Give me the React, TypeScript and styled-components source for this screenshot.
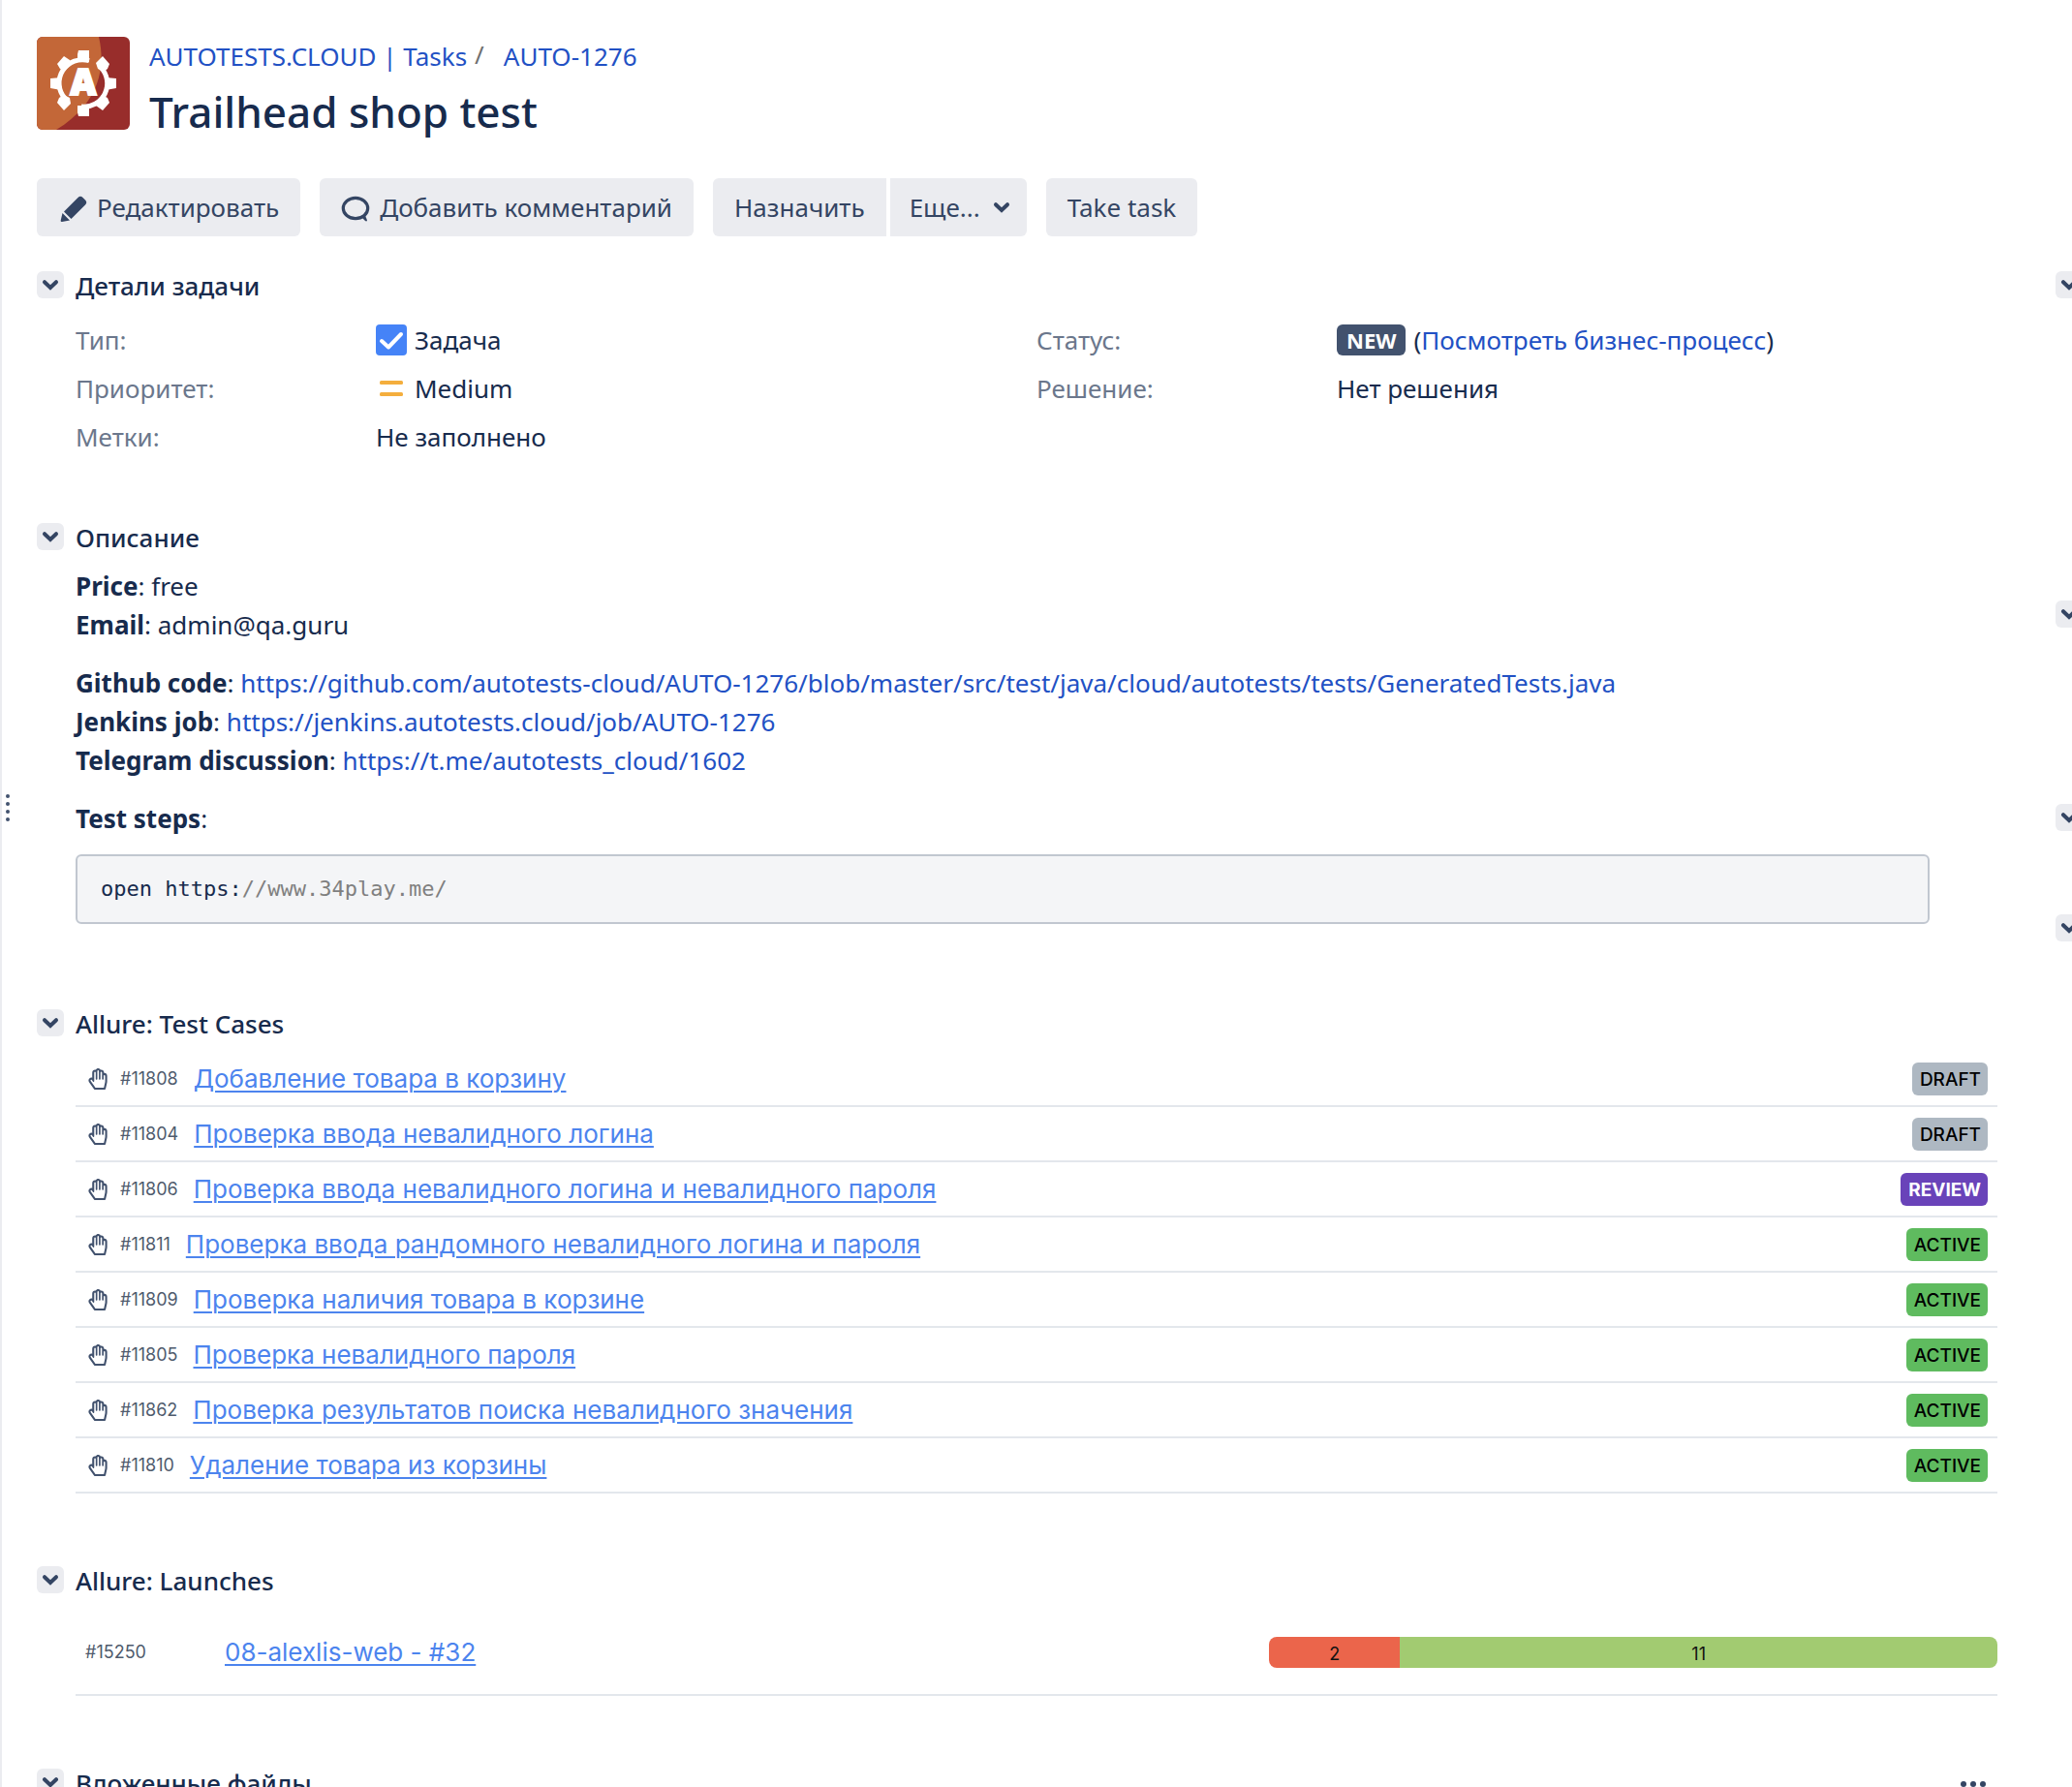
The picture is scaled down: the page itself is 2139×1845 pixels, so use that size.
import React from 'react';
import styled, { createGlobalStyle } from 'styled-components';
import { FaRegHandPaper } from 'react-icons/fa';

const GlobalStyle = createGlobalStyle`
  *, *::before, *::after { box-sizing: border-box; }
  body {
    margin: 0;
    background: #fff;
    color: #172b4d;
    font-family: 'Noto Sans', 'Open Sans', sans-serif;
    font-size: 26px;
    line-height: 40px;
  }
  h1, h2, p, dl, dd, ul, pre { margin: 0; padding: 0; }
  button { font: inherit; border: 0; }
`;

const Page = styled.div`
  display: flex;
  height: 100vh;
  overflow: hidden;
`;

const Splitter = styled.div`
  flex: 0 0 12px;
  display: flex;
  flex-direction: column;
  gap: 4px;
  padding: 820px 0 0 4px;
  border-left: 2px solid #ebecf0;
`;

const SplitterDot = styled.span`
  flex: none;
  width: 4px;
  height: 4px;
  border-radius: 2px;
  background: #42526e;
`;

const Main = styled.main`
  flex: 1;
  min-width: 0;
  padding: 38px 60px 0 26px;
`;

const Aside = styled.aside`
  flex: 0 0 17px;
  overflow: hidden;
  padding-top: 280px;
`;

const AsideBlock = styled.div<{ $height: number }>`
  height: ${(p) => p.$height}px;
`;

const Link = styled.a`
  color: #2251c4;
  text-decoration: none;
`;

const IssueHeader = styled.header`
  display: flex;
  gap: 20px;
`;

const Logo = styled.svg`
  flex: none;
  width: 96px;
  height: 96px;
  border-radius: 6px;
`;

const Breadcrumbs = styled.nav`
  display: flex;
`;

const Slash = styled.span`
  margin: 0 20px 0 8px;
  color: #707070;
  font-size: 26px;
  line-height: 36px;
`;

const Title = styled.h1`
  margin-top: 8px;
  font-size: 44px;
  font-weight: 500;
  line-height: 58px;
`;

const Toolbar = styled.div`
  display: flex;
  gap: 20px;
  margin-top: 40px;
`;

const ButtonGroup = styled.div`
  display: flex;
  gap: 4px;

  & > :first-child { border-radius: 6px 0 0 6px; }
  & > :last-child { border-radius: 0 6px 6px 0; }
`;

const ToolButton = styled.button<{ $menu?: boolean }>`
  display: flex;
  align-items: center;
  gap: 8px;
  height: 60px;
  padding: ${(p) => (p.$menu ? '0 12px 0 20px' : '0 22px')};
  border-radius: 6px;
  background: #ebecf0;
  color: #344563;
  white-space: nowrap;
`;

const Section = styled.section<{ $gap: number }>`
  margin-top: ${(p) => p.$gap}px;
`;

const SectionHead = styled.div`
  display: flex;
  align-items: center;
  gap: 12px;
  height: 40px;
`;

const Heading = styled.h2`
  flex: 1;
  padding-top: 1px;
  font-size: 26px;
  font-weight: 500;
`;

const ToggleButton = styled.button`
  display: block;
  flex: none;
  width: 28px;
  height: 28px;
  padding: 0;
  border-radius: 6px;
  background: #ebecf0;
`;

const MoreButton = styled.button`
  display: flex;
  padding: 0;
  margin-right: 10px;
  background: none;
`;

const Icon = styled.svg`
  display: block;
  flex: none;
`;

const SectionBody = styled.div`
  padding: 10px 0 0 40px;
`;

const Details = styled.dl`
  display: grid;
  grid-template-columns: 310px 1fr 310px 1fr;
  grid-auto-rows: 50px;
  align-items: center;
  padding: 12px 0 0 40px;
`;

const Term = styled.dt`
  color: #6b778c;
`;

const Value = styled.dd<{ $wide?: boolean }>`
  display: flex;
  align-items: center;
  gap: 8px;
  grid-column: ${(p) => (p.$wide ? 'span 3' : 'auto')};
`;

const StatusBadge = styled.span`
  padding: 0 10px;
  border-radius: 6px;
  background: #42526e;
  color: #fff;
  font-size: 22px;
  font-weight: 700;
  line-height: 32px;
`;

const Description = styled.div`
  padding: 11px 0 0 40px;
`;

const Paragraph = styled.p`
  margin-bottom: 20px;
`;

const StepsLabel = styled.p`
  margin-bottom: 17px;
`;

const CodeBlock = styled.pre`
  margin-right: 70px;
  padding: 14px 24px;
  border: 2px solid #c1c7d0;
  border-radius: 6px;
  background: #f4f5f7;
  font-family: 'DejaVu Sans Mono', monospace;
  font-size: 22px;
`;

const CodeComment = styled.span`
  color: #808080;
`;

const List = styled.ul`
  list-style: none;
  font-family: Inter, sans-serif;
`;

const CaseRow = styled.li`
  display: flex;
  align-items: center;
  height: 57px;
  padding: 0 10px 0 12px;
  border-bottom: 2px solid #e3e7ec;
  color: #42526e;
`;

const LaunchRow = styled.li`
  display: grid;
  grid-template-columns: 144px 1fr 752px;
  align-items: center;
  height: 90px;
  padding: 2px 0 0 10px;
  border-bottom: 2px solid #e3e7ec;
`;

const AllureId = styled.span`
  color: #4f5b6d;
  font-size: 18px;
`;

const CaseId = styled(AllureId)`
  margin: 0 16px 0 12px;
`;

const AllureLink = styled.a`
  color: #4c84ee;
  text-decoration: underline;
  text-decoration-thickness: 2px;
  text-underline-offset: 3px;
`;

type Status = 'DRAFT' | 'REVIEW' | 'ACTIVE';

const statusColors: Record<Status, string> = {
  DRAFT: '#aeb8c2',
  REVIEW: '#6943b9',
  ACTIVE: '#5fbb5f',
};

const CaseBadge = styled.span<{ $status: Status }>`
  margin-left: auto;
  padding: 2px 7px 0 8px;
  border-radius: 6px;
  background: ${(p) => statusColors[p.$status]};
  color: ${(p) => (p.$status === 'REVIEW' ? '#fff' : '#000')};
  font-size: 19px;
  font-weight: ${(p) => (p.$status === 'REVIEW' ? 700 : 500)};
  line-height: 32px;
`;

const Bar = styled.div`
  display: flex;
  height: 32px;
  border-radius: 8px;
  overflow: hidden;
`;

const BarPart = styled.span<{ $color: string }>`
  flex: 1;
  background: ${(p) => p.$color};
  color: #111;
  font-size: 18px;
  line-height: 36px;
  text-align: center;

  &:first-child { flex: 0 0 18%; }
`;

const cases: { id: string; name: string; status: Status }[] = [
  { id: '#11808', name: 'Добавление товара в корзину', status: 'DRAFT' },
  { id: '#11804', name: 'Проверка ввода невалидного логина', status: 'DRAFT' },
  { id: '#11806', name: 'Проверка ввода невалидного логина и невалидного пароля', status: 'REVIEW' },
  { id: '#11811', name: 'Проверка ввода рандомного невалидного логина и пароля', status: 'ACTIVE' },
  { id: '#11809', name: 'Проверка наличия товара в корзине', status: 'ACTIVE' },
  { id: '#11805', name: 'Проверка невалидного пароля', status: 'ACTIVE' },
  { id: '#11862', name: 'Проверка результатов поиска невалидного значения', status: 'ACTIVE' },
  { id: '#11810', name: 'Удаление товара из корзины', status: 'ACTIVE' },
];

const asideBlocks = [340, 210, 114, 100];

function Chevron() {
  return (
    <Icon width="28" height="28" viewBox="0 0 28 28" aria-hidden="true">
      <path d="M8 11.2 14 17 20 11.2" fill="none" stroke="#344563" strokeWidth="4" strokeLinecap="round" />
    </Icon>
  );
}

function Toggle({ label }: { label: string }) {
  return (
    <ToggleButton type="button" aria-label={label}>
      <Chevron />
    </ToggleButton>
  );
}

function ProjectLogo() {
  return (
    <Logo viewBox="0 0 96 96" role="img" aria-label="AUTOTESTS.CLOUD">
      <rect width="96" height="96" fill="#982d2b" />
      <path d="M0 0H64C71 30 66 68 20 96H0Z" fill="#c36738" />
      <g fill="none" stroke="#fff" strokeWidth="5">
        <path d="M54 24.7A24 24 0 0 0 29 63.5" />
        <path d="M66 31.5A24 24 0 0 1 46 72" />
      </g>
      <g fill="#fff">
        <path d="M43 14H54V26H42V18Z" />
        <path d="M42 71H54V82H43L42 78Z" />
        <path d="M14 43 25 42V55L14 53Z" />
        <path d="M82 43 71 42V55L82 53Z" />
        <path d="M21 28 28 20 34 24 35 29 29 35 24 33Z" />
        <path d="M75 28 68 20 61 27 63 33 69 36 73 33Z" />
        <path d="M21 68 28 76 35 69 34 63 28 60 23 63Z" />
        <path d="M75 68 68 76 61 71 61 67 67 60 73 63Z" />
      </g>
      <text x="48" y="60" textAnchor="middle" fill="#fff" stroke="#fff" strokeWidth="2" fontFamily="Open Sans" fontWeight="800" fontSize="37">
        A
      </text>
    </Logo>
  );
}

function PencilIcon() {
  return (
    <Icon width="32" height="32" viewBox="0 0 32 32" aria-hidden="true">
      <g fill="#344563">
        <path d="M6 20.5 20.5 6Q23 3.5 25.500 6L28 8.500Q30.500 11 28 13.500L13.500 28Z" />
        <path d="M4.500 22 12 29.500 4 31Q2.300 31 2.700 29.500Z" />
      </g>
    </Icon>
  );
}

function CommentIcon() {
  return (
    <Icon width="32" height="32" viewBox="0 0 32 32" aria-hidden="true">
      <ellipse cx="15" cy="17" rx="12.700" ry="10.700" fill="none" stroke="#344563" strokeWidth="3.200" />
      <path d="M20.500 25.500 24.500 23 27 29.500Q26.500 31 25 30Z" fill="#344563" />
    </Icon>
  );
}

function TaskIcon() {
  return (
    <Icon width="32" height="32" viewBox="0 0 32 32" aria-hidden="true">
      <rect width="32" height="32" rx="4" fill="#4583f7" />
      <path d="M6 17 13 23.500 26 10" fill="none" stroke="#fff" strokeWidth="4" strokeLinecap="round" strokeLinejoin="round" />
    </Icon>
  );
}

function PriorityIcon() {
  return (
    <Icon width="32" height="32" viewBox="0 0 32 32" aria-hidden="true">
      <rect x="4" y="8" width="24" height="4" rx="1.500" fill="#f4ae3d" />
      <rect x="4" y="20" width="24" height="4" rx="1.500" fill="#f4ae3d" />
    </Icon>
  );
}

export default function App() {
  return (
    <>
      <GlobalStyle />
      <Page>
        <Splitter>
          <SplitterDot />
          <SplitterDot />
          <SplitterDot />
          <SplitterDot />
        </Splitter>
        <Main>
          <IssueHeader>
            <ProjectLogo />
            <div>
              <Breadcrumbs>
                <Link href="#project">AUTOTESTS.CLOUD | Tasks</Link>
                <Slash>/</Slash>
                <Link href="#issue">AUTO-1276</Link>
              </Breadcrumbs>
              <Title>Trailhead shop test</Title>
            </div>
          </IssueHeader>

          <Toolbar>
            <ToolButton type="button"><PencilIcon />Редактировать</ToolButton>
            <ToolButton type="button"><CommentIcon />Добавить комментарий</ToolButton>
            <ButtonGroup>
              <ToolButton type="button">Назначить</ToolButton>
              <ToolButton type="button" $menu>Еще... <Chevron /></ToolButton>
            </ButtonGroup>
            <ToolButton type="button">Take task</ToolButton>
          </Toolbar>

          <Section $gap={30}>
            <SectionHead>
              <Toggle label="Детали задачи" />
              <Heading>Детали задачи</Heading>
            </SectionHead>
            <Details>
              <Term>Тип:</Term>
              <Value><TaskIcon />Задача</Value>
              <Term>Статус:</Term>
              <Value>
                <StatusBadge>NEW</StatusBadge>
                <span>(<Link href="#workflow">Посмотреть бизнес-процесс</Link>)</span>
              </Value>
              <Term>Приоритет:</Term>
              <Value><PriorityIcon />Medium</Value>
              <Term>Решение:</Term>
              <Value>Нет решения</Value>
              <Term>Метки:</Term>
              <Value $wide>Не заполнено</Value>
            </Details>
          </Section>

          <Section $gap={58}>
            <SectionHead>
              <Toggle label="Описание" />
              <Heading>Описание</Heading>
            </SectionHead>
            <Description>
              <Paragraph>
                <b>Price</b>: free<br />
                <b>Email</b>: admin@qa.guru
              </Paragraph>
              <Paragraph>
                <b>Github code</b>: <Link href="#github">https://github.com/autotests-cloud/AUTO-1276/blob/master/src/test/java/cloud/autotests/tests/GeneratedTests.java</Link><br />
                <b>Jenkins job</b>: <Link href="#jenkins">https://jenkins.autotests.cloud/job/AUTO-1276</Link><br />
                <b>Telegram discussion</b>: <Link href="#telegram">https://t.me/autotests_cloud/1602</Link>
              </Paragraph>
              <StepsLabel><b>Test steps</b>:</StepsLabel>
              <CodeBlock>open https:<CodeComment>//www.34play.me/</CodeComment></CodeBlock>
            </Description>
          </Section>

          <Section $gap={82}>
            <SectionHead>
              <Toggle label="Allure: Test Cases" />
              <Heading>Allure: Test Cases</Heading>
            </SectionHead>
            <SectionBody>
              <List>
                {cases.map((c) => (
                  <CaseRow key={c.id}>
                    <FaRegHandPaper size={22} />
                    <CaseId>{c.id}</CaseId>
                    <AllureLink href={c.id}>{c.name}</AllureLink>
                    <CaseBadge $status={c.status}>{c.status}</CaseBadge>
                  </CaseRow>
                ))}
              </List>
            </SectionBody>
          </Section>

          <Section $gap={69}>
            <SectionHead>
              <Toggle label="Allure: Launches" />
              <Heading>Allure: Launches</Heading>
            </SectionHead>
            <SectionBody>
              <List>
                <LaunchRow>
                  <AllureId>#15250</AllureId>
                  <div><AllureLink href="#15250">08-alexlis-web - #32</AllureLink></div>
                  <Bar>
                    <BarPart $color="#eb654b">2</BarPart>
                    <BarPart $color="#a2cb71">11</BarPart>
                  </Bar>
                </LaunchRow>
              </List>
            </SectionBody>
          </Section>

          <Section $gap={69}>
            <SectionHead>
              <Toggle label="Вложенные файлы" />
              <Heading>Вложенные файлы</Heading>
              <MoreButton type="button" aria-label="Действия">
                <Icon width="28" height="28" viewBox="0 0 28 28" aria-hidden="true">
                  <g fill="#344563">
                    <circle cx="3" cy="16" r="3" />
                    <circle cx="13" cy="16" r="3" />
                    <circle cx="23" cy="16" r="3" />
                  </g>
                </Icon>
              </MoreButton>
            </SectionHead>
          </Section>
        </Main>
        <Aside>
          {asideBlocks.map((height, i) => (
            <AsideBlock key={i} $height={height}>
              <Toggle label="Свернуть" />
            </AsideBlock>
          ))}
        </Aside>
      </Page>
    </>
  );
}
